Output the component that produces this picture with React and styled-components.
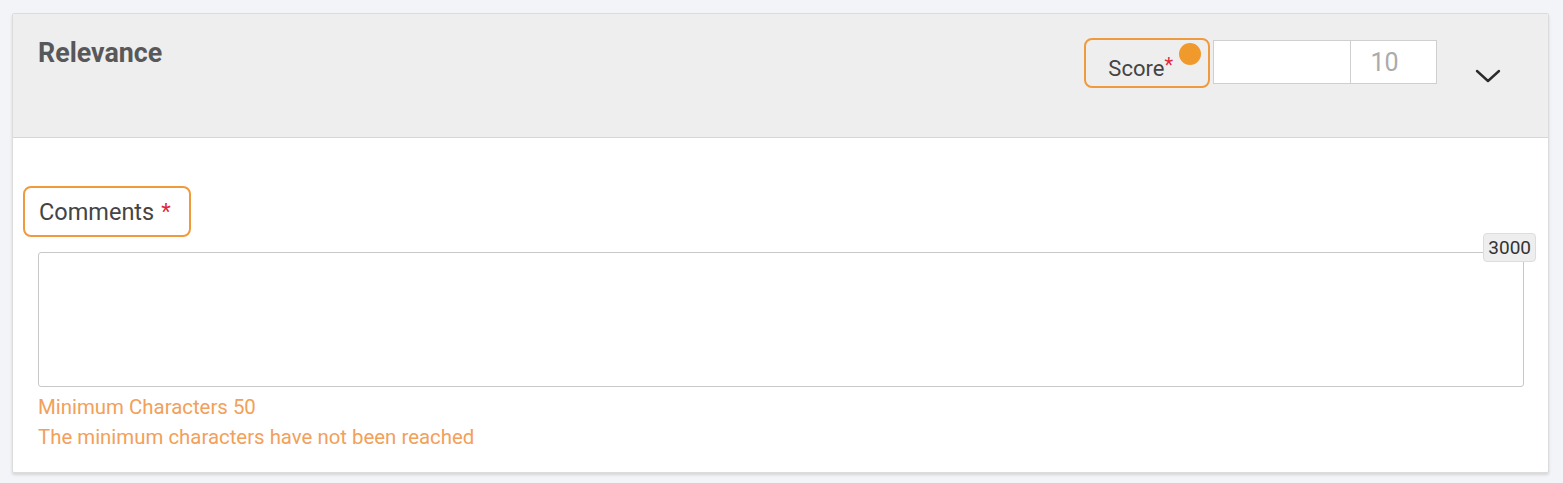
import React from 'react'
import styled, { createGlobalStyle } from 'styled-components'

const GlobalStyle = createGlobalStyle`
  body {
    margin: 0;
    background: #f3f4f8;
    font-family: Roboto, 'Liberation Sans', sans-serif;
  }
`

const Page = styled.div`
  padding: 13px 14px 12px 12px;
`

const Card = styled.section`
  background: #fff;
  border: 1px solid #dcdcdc;
  border-radius: 2px;
  box-shadow: 0 2px 3px rgba(0, 0, 0, .12);
  overflow: hidden;
`

const Header = styled.header`
  display: flex;
  align-items: flex-start;
  justify-content: space-between;
  height: 124px;
  padding: 0 47px 0 25px;
  background: #eeeeee;
  border-bottom: 1px solid #d6d6d6;
  box-sizing: border-box;
`

const Title = styled.h2`
  margin: 23px 0 0;
  font-size: 26.8px;
  line-height: 32px;
  font-weight: 700;
  color: #58585a;
`

const ScoreGroup = styled.div`
  display: flex;
  align-items: flex-start;
  margin-top: 24px;
`

const Highlight = styled.div`
  position: relative;
  display: flex;
  align-items: center;
  height: ${p => p.$height}px;
  padding: ${p => p.$pad};
  border: 2.5px solid #f09a3e;
  border-radius: 8px;
  box-sizing: border-box;
  font-size: ${p => p.$size}px;
  color: #444;
`

const Star = styled.span`
  color: #e0283c;
  font-size: ${p => p.$size || 22}px;
  margin-left: ${p => p.$gap || 0}px;
  align-self: ${p => p.$top ? 'flex-start' : 'auto'};
  margin-top: ${p => p.$top ? 2 : 0}px;
`

const Dot = styled.span`
  position: absolute;
  top: 3px;
  right: 7px;
  width: 22px;
  height: 22px;
  border-radius: 50%;
  background: #f09a2e;
`

const Box = styled.div`
  height: 44px;
  width: ${p => p.$w}px;
  margin-top: 2px;
  padding-right: ${p => p.$padRight || 0}px;
  border: 1px solid #cfcfcf;
  background: #fff;
  box-sizing: border-box;
  display: flex;
  align-items: center;
  justify-content: center;
  font-size: 25px;
  color: #ababab;
`

const Chevron = styled.svg`
  width: 26px;
  height: 16px;
  margin: 30px 0 0 38px;
`

const Body = styled.div`
  padding: 48px 24px 20px 10px;
`

const Field = styled.div`
  position: relative;
  margin: 15px 0 0 15px;
`

const TextArea = styled.div`
  height: 133px;
  border: 1px solid #c8c8c8;
  border-radius: 3px;
`

const Counter = styled.span`
  position: absolute;
  top: -19px;
  right: -12px;
  padding: 1px 4px;
  background: #eeeeee;
  border: 1px solid #dddddd;
  border-radius: 4px;
  font-size: 19px;
  line-height: 25px;
  color: #333;
`

const Hint = styled.p`
  margin: 0;
  padding-left: 15px;
  font-size: 20.4px;
  line-height: 30px;
  color: #f2a05a;
  &:first-of-type { margin-top: 5px; }
`

export default function App() {
  return (
    <Page>
      <GlobalStyle />
      <Card>
        <Header>
          <Title>Relevance</Title>
          <ScoreGroup>
            <Highlight $height={50} $pad="11px 35px 0 22px" $size={22}>
              Score<Star $size={20} $top>*</Star>
              <Dot />
            </Highlight>
            <Box $w={138} style={{ marginLeft: 3 }} />
            <Box $w={86} $padRight={18} style={{ borderLeft: 'none' }}>10</Box>
            <Chevron viewBox="0 0 26 16" fill="none">
              <path d="M2 3l11 10L24 3" stroke="#2b2b2b" strokeWidth="2.4" strokeLinecap="round" strokeLinejoin="round" />
            </Chevron>
          </ScoreGroup>
        </Header>
        <Body>
          <Highlight $height={51} $pad="0 18px 0 14px" $size={23.5} style={{ display: 'inline-flex' }}>
            Comments<Star $gap={7}>*</Star>
          </Highlight>
          <Field>
            <TextArea />
            <Counter>3000</Counter>
          </Field>
          <Hint>Minimum Characters 50</Hint>
          <Hint>The minimum characters have not been reached</Hint>
        </Body>
      </Card>
    </Page>
  )
}
